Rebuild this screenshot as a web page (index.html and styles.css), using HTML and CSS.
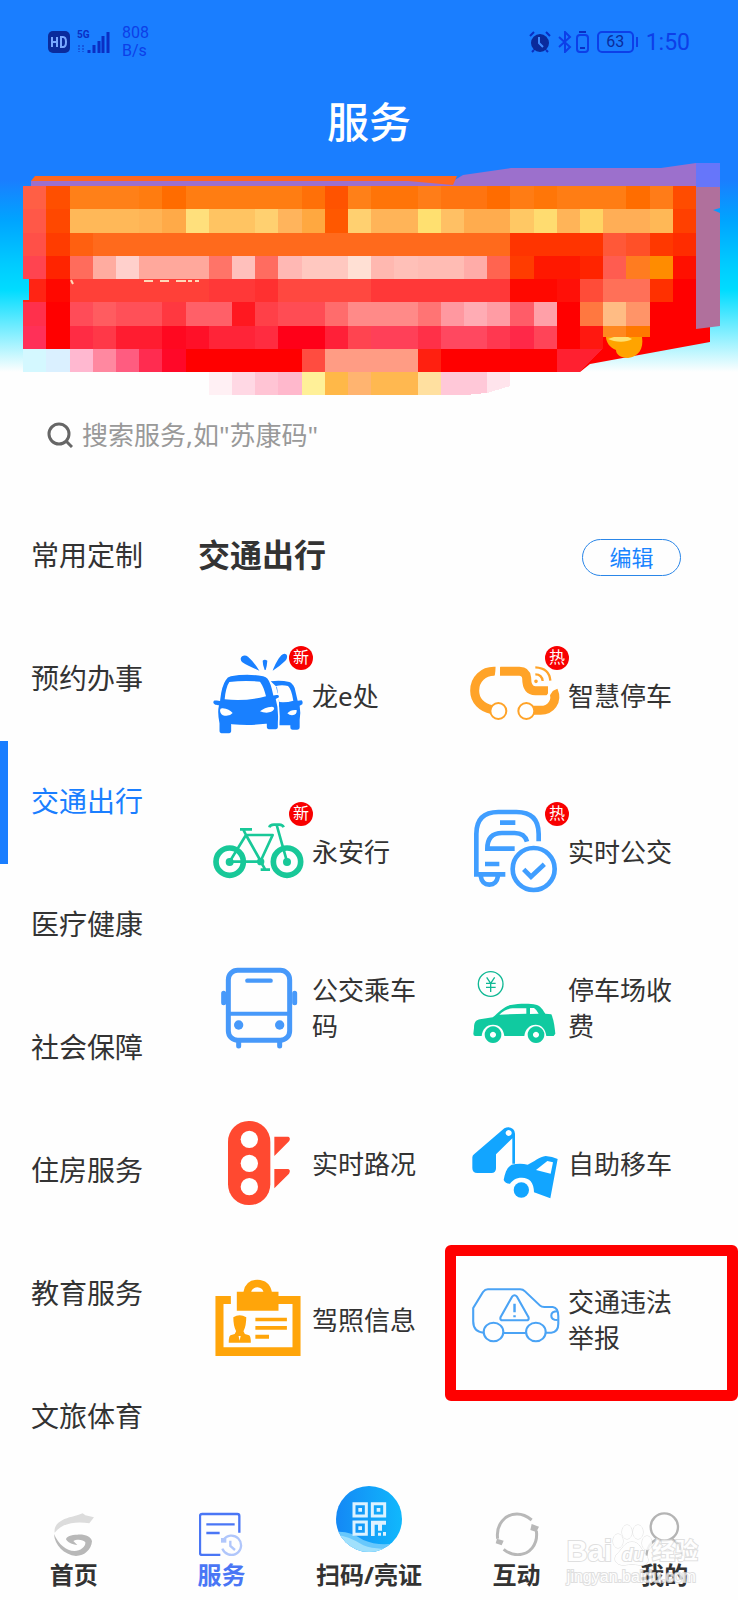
FILE: index.html
```html
<!DOCTYPE html>
<html lang="zh-CN">
<head>
    <meta charset="UTF-8">
    <meta name="viewport" content="width=device-width, initial-scale=1.0">
    <title>服务</title>
    <link rel="stylesheet" href="styles.css">
</head>
<body>
    <header class="header">
        <div class="status-bar">
            <div class="status-left">
                <svg class="hd" viewBox="0 0 22 22"><rect width="22" height="22" rx="5" fill="#0a2b9c"/><path d="M4 6v10M4 11h5M9 6v10M13 6v10h2q3 0 3-5t-3-5z" fill="none" stroke="#78a8ff" stroke-width="2"/></svg>
                <div class="signal">
                    <span class="signal-type">5G</span>
                    <svg viewBox="0 0 34 22" width="34" height="22"><path d="M13 19v3M18 14v8M23 10v12M27 5v17M32 1v21" stroke="#0a2fc4" stroke-width="3"/><path d="M3 14v7M7 14v7" stroke="#1558e0" stroke-width="2" stroke-dasharray="2 1"/></svg>
                </div>
                <div class="speed">808<br>B/s</div>
            </div>
            <div class="status-right">
                <svg width="22" height="22" viewBox="0 0 22 22"><circle cx="11" cy="12" r="9" fill="#0a2b9c"/><path d="M1 5l4-4M17 1l4 4M5 19l-2 2M17 19l2 2" stroke="#0a2fc4" stroke-width="2"/><path d="M10 6v6l4 4" fill="none" stroke="#3f8cff" stroke-width="2"/></svg>
                <svg class="bluetooth" width="14" height="22" viewBox="0 0 14 22"><path d="M1 6l11 10-5 5V1l5 5L1 16" fill="none" stroke="#0d3fe8" stroke-width="2"/></svg>
                <svg width="13" height="22" viewBox="0 0 13 22"><rect x="1" y="4" width="11" height="17" rx="3" fill="none" stroke="#0d3fe8" stroke-width="2"/><path d="M3 1h7M4 17h5" stroke="#0a2fc4" stroke-width="2"/></svg>
                <span class="battery">63</span>
                <time class="clock">1:50</time>
            </div>
        </div>
        <h1 class="page-title">服务</h1>
        <svg class="banner" viewBox="0 162 738 233" preserveAspectRatio="none">
            <path fill="#9c70cc" d="M31 181H453L463 175L511 168H661L696 163V187H31z"/>
            <path fill="#6676fa" d="M696 163h24v24h-24z"/>
            <path fill="#ff671e" d="M35 176H457L453 185L408 181H31z"/>
            <path fill="#ff0000" d="M560 325H710V342L590 364L580 372H560z"/>
            <!-- blocks, one group per row -->
            <g transform="translate(0 186) scale(23.2 23.25)" shape-rendering="crispEdges">
                <g>
                    <path fill="#ff5f45" d="M1 0h1v1h-1z"/><path fill="#ff4f00" d="M2 0h1v1h-1z"/><path fill="#ff8018" d="M3 0h3v1h-3z"/><path fill="#ff7c10" d="M6 0h1v1h-1z"/><path fill="#ff6c00" d="M7 0h1v1h-1z"/><path fill="#ff7d12" d="M8 0h5v1h-5z"/><path fill="#ff7008" d="M13 0h1v1h-1z"/><path fill="#ff5300" d="M14 0h1v1h-1z"/><path fill="#ff8018" d="M15 0h1v1h-1z"/><path fill="#ff7408" d="M16 0h2v1h-2z"/><path fill="#ff7d18" d="M18 0h1v1h-1z"/><path fill="#ff7410" d="M19 0h2v1h-2z"/><path fill="#ff6c00" d="M21 0h1v1h-1z"/><path fill="#ff7c14" d="M22 0h1v1h-1z"/><path fill="#ff7608" d="M23 0h1v1h-1z"/><path fill="#ff7d14" d="M24 0h3v1h-3z"/><path fill="#ff6d00" d="M27 0h1v1h-1z"/><path fill="#ff7c18" d="M28 0h1v1h-1z"/><path fill="#ff4c00" d="M29 0h1v1h-1z"/>
                </g>
                <g transform="translate(0 1)">
                    <path fill="#ff5848" d="M1 0h1v1h-1z"/><path fill="#ff4800" d="M2 0h1v1h-1z"/><path fill="#ffb858" d="M3 0h3v1h-3z"/><path fill="#ffb455" d="M6 0h1v1h-1z"/><path fill="#ffaa48" d="M7 0h1v1h-1z"/><path fill="#ffe07c" d="M8 0h1v1h-1z"/><path fill="#ffc462" d="M9 0h2v1h-2z"/><path fill="#ffd070" d="M11 0h1v1h-1z"/><path fill="#ffb45c" d="M12 0h1v1h-1z"/><path fill="#ffa840" d="M13 0h1v1h-1z"/><path fill="#ff5800" d="M14 0h1v1h-1z"/><path fill="#ffd070" d="M15 0h1v1h-1z"/><path fill="#ffb458" d="M16 0h2v1h-2z"/><path fill="#ffe070" d="M18 0h1v1h-1z"/><path fill="#ffc064" d="M19 0h1v1h-1z"/><path fill="#ffac4e" d="M20 0h2v1h-2z"/><path fill="#ffc864" d="M22 0h1v1h-1z"/><path fill="#ffdc70" d="M23 0h1v1h-1z"/><path fill="#ffb458" d="M24 0h1v1h-1z"/><path fill="#ffd464" d="M25 0h1v1h-1z"/><path fill="#ffae56" d="M26 0h2v1h-2z"/><path fill="#ffb856" d="M28 0h1v1h-1z"/><path fill="#ff4000" d="M29 0h1v1h-1z"/>
                </g>
                <g transform="translate(0 2)">
                    <path fill="#ff5048" d="M1 0h1v1h-1z"/><path fill="#ff3c00" d="M2 0h1v1h-1z"/><path fill="#ff6010" d="M3 0h1v1h-1z"/><path fill="#ff6a1c" d="M4 0h18v1h-18z"/><path fill="#ff3400" d="M22 0h4v1h-4z"/><path fill="#ff5838" d="M26 0h1v1h-1z"/><path fill="#ff5028" d="M27 0h1v1h-1z"/><path fill="#ff3800" d="M28 0h1v1h-1z"/><path fill="#ff2c00" d="M29 0h1v1h-1z"/>
                </g>
                <g transform="translate(0 3)">
                    <path fill="#ff4450" d="M1 0h1v1h-1z"/><path fill="#ff2400" d="M2 0h1v1h-1z"/><path fill="#ff6c5c" d="M3 0h1v1h-1z"/><path fill="#ffaca0" d="M4 0h1v1h-1z"/><path fill="#ffd0cc" d="M5 0h1v1h-1z"/><path fill="#ffa89c" d="M6 0h3v1h-3z"/><path fill="#ff7468" d="M9 0h1v1h-1z"/><path fill="#ffc0bc" d="M10 0h1v1h-1z"/><path fill="#ff6c60" d="M11 0h1v1h-1z"/><path fill="#ffb8b4" d="M12 0h1v1h-1z"/><path fill="#ffc8c0" d="M13 0h2v1h-2z"/><path fill="#ffe0d4" d="M15 0h1v1h-1z"/><path fill="#ffb8b0" d="M16 0h1v1h-1z"/><path fill="#ffc0b8" d="M17 0h1v1h-1z"/><path fill="#ffbcb4" d="M18 0h2v1h-2z"/><path fill="#ffaca8" d="M20 0h1v1h-1z"/><path fill="#ff6450" d="M21 0h1v1h-1z"/><path fill="#ff3c00" d="M22 0h1v1h-1z"/><path fill="#ff1800" d="M23 0h2v1h-2z"/><path fill="#ff2400" d="M25 0h1v1h-1z"/><path fill="#ff5c50" d="M26 0h1v1h-1z"/><path fill="#ff7c20" d="M27 0h1v1h-1z"/><path fill="#ff8c00" d="M28 0h1v1h-1z"/><path fill="#ff1000" d="M29 0h1v1h-1z"/>
                </g>
                <g transform="translate(0 4)">
                    <path fill="#ff2414" d="M1.25 0H2v1H1V.9h.25z"/><path fill="#ff0800" d="M2 0h1v1h-1z"/><path fill="#ff4038" d="M3 0h6v1h-6z"/><path fill="#ff3838" d="M9 0h2v1h-2z"/><path fill="#ff3030" d="M11 0h1v1h-1z"/><path fill="#ff4840" d="M12 0h4v1h-4z"/><path fill="#ff3838" d="M16 0h6v1h-6z"/><path fill="#ff0800" d="M22 0h2v1h-2z"/><path fill="#ff1008" d="M24 0h1v1h-1z"/><path fill="#ff4c38" d="M25 0h1v1h-1z"/><path fill="#ff7058" d="M26 0h2v1h-2z"/><path fill="#ff3000" d="M28 0h1v1h-1z"/><path fill="#ff0000" d="M29 0h1v1h-1z"/>
                </g>
                <g transform="translate(0 5)">
                    <path fill="#ff304c" d="M1 0h1v1h-1z"/><path fill="#ff0000" d="M2 0h1v1h-1z"/><path fill="#ff4c58" d="M3 0h1v1h-1z"/><path fill="#ff5c60" d="M4 0h1v1h-1z"/><path fill="#ff5058" d="M5 0h2v1h-2z"/><path fill="#ff3840" d="M7 0h1v1h-1z"/><path fill="#ff6068" d="M8 0h2v1h-2z"/><path fill="#ff1820" d="M10 0h1v1h-1z"/><path fill="#ff4048" d="M11 0h1v1h-1z"/><path fill="#ff4c54" d="M12 0h2v1h-2z"/><path fill="#ff6c6c" d="M14 0h1v1h-1z"/><path fill="#ff8a88" d="M15 0h3v1h-3z"/><path fill="#ff7474" d="M18 0h1v1h-1z"/><path fill="#ff98a0" d="M19 0h1v1h-1z"/><path fill="#ffacb4" d="M20 0h1v1h-1z"/><path fill="#ff9ca4" d="M21 0h1v1h-1z"/><path fill="#ff5c68" d="M22 0h1v1h-1z"/><path fill="#ffa0a8" d="M23 0h1v1h-1z"/><path fill="#ff0000" d="M24 0h1v1h-1z"/><path fill="#ff7840" d="M25 0h1v1h-1z"/><path fill="#ffbc84" d="M26 0h1v1h-1z"/><path fill="#ff9468" d="M27 0h1v1h-1z"/><path fill="#ff0000" d="M28 0h2v1h-2z"/>
                </g>
                <g transform="translate(0 6)">
                    <path fill="#ff3058" d="M1 0h1v1h-1z"/><path fill="#ff0000" d="M2 0h1v1h-1z"/><path fill="#ff2c44" d="M3 0h1v1h-1z"/><path fill="#ff3848" d="M4 0h1v1h-1z"/><path fill="#ff1c30" d="M5 0h2v1h-2z"/><path fill="#ff0820" d="M7 0h1v1h-1z"/><path fill="#ff1028" d="M8 0h1v1h-1z"/><path fill="#ff2438" d="M9 0h2v1h-2z"/><path fill="#ff2c40" d="M11 0h1v1h-1z"/><path fill="#ff0018" d="M12 0h2v1h-2z"/><path fill="#ff2038" d="M14 0h1v1h-1z"/><path fill="#ff4450" d="M15 0h1v1h-1z"/><path fill="#ff4058" d="M16 0h2v1h-2z"/><path fill="#ff3048" d="M18 0h1v1h-1z"/><path fill="#ff4860" d="M19 0h2v1h-2z"/><path fill="#ff3850" d="M21 0h1v1h-1z"/><path fill="#ff2848" d="M22 0h1v1h-1z"/><path fill="#ff4458" d="M23 0h1v1h-1z"/><path fill="#ff0000" d="M24 0h1v1h-1z"/><path fill="#ff1810" d="M25 0h1v1h-1z"/><path fill="#ff8820" d="M26 0h1v.5h-1z"/><path fill="#ff7800" d="M27 0h1v.5h-1z"/>
                </g>
                <g transform="translate(0 7)">
                    <path fill="#d4f8ff" d="M1 0h1v1h-1z"/><path fill="#daf0ff" d="M2 0h1v1h-1z"/><path fill="#ffb8d0" d="M3 0h1v1h-1z"/><path fill="#ff88a0" d="M4 0h1v1h-1z"/><path fill="#ff5c80" d="M5 0h1v1h-1z"/><path fill="#ff2c50" d="M6 0h1v1h-1z"/><path fill="#ff0828" d="M7 0h1v1h-1z"/><path fill="#ff0000" d="M8 0h5v1h-5z"/><path fill="#ff4c40" d="M13 0h1v1h-1z"/><path fill="#ff9c84" d="M14 0h4v1h-4z"/><path fill="#ff2010" d="M18 0h1v1h-1z"/><path fill="#ff0000" d="M19 0h5v1h-5z"/><path fill="#ff2030" d="M24 0H26L25.3 .7L25 1H24z"/>
                </g>
                <g transform="translate(0 8)">
                    <path fill="#fff0f4" d="M9 0h1v1h-1z"/><path fill="#ffd8e4" d="M10 0h1v1h-1z"/><path fill="#ffc4d4" d="M11 0h1v1h-1z"/><path fill="#ffb8cc" d="M12 0h1v1h-1z"/><path fill="#fff098" d="M13 0h1v1h-1z"/><path fill="#ffb848" d="M14 0h1v1h-1z"/><path fill="#ffb470" d="M15 0h1v1h-1z"/><path fill="#ffb850" d="M16 0h2v1h-2z"/><path fill="#ffe0a0" d="M18 0h1v1h-1z"/><path fill="#ffc8d8" d="M19 0h2V.9L20 1H19z"/><path fill="#ffe4ec" d="M21 0h1V.6L21 .9z"/>
                </g>
            </g>
            <path fill="#b0709c" d="M696 187h24v21l-7 2 7 3V326l-24 3z"/>
            <path fill="#ffa400" d="M606 337h36c2 12-4 20-14 21-8 0-12-4-12-8-6-2-10-8-10-13z"/>
            <path fill="#ffe070" d="M608 339c6 3 18 4 24 0l-4-2h-14z"/>
            <path fill="none" stroke="#ffd8b8" stroke-width="2" d="M71 280l2 4M144 281h9M160 281h9M176 281h10M188 281h4M195 281h4"/>
        </svg>
    </header>

    <form class="search">
        <svg width="26" height="26" viewBox="0 0 26 26"><circle cx="12" cy="12" r="10" fill="none" stroke="#666" stroke-width="3"/><path d="M19 19l6 6" stroke="#666" stroke-width="3"/></svg>
        <input type="search" aria-label="搜索服务" placeholder='搜索服务,如"苏康码"'>
    </form>

    <div class="content">
        <nav class="sidebar">
            <a href="#">常用定制</a>
            <a href="#">预约办事</a>
            <a href="#" class="active">交通出行</a>
            <a href="#">医疗健康</a>
            <a href="#">社会保障</a>
            <a href="#">住房服务</a>
            <a href="#">教育服务</a>
            <a href="#">文旅体育</a>
        </nav>

        <main class="main">
            <div class="section-head">
                <h2>交通出行</h2>
                <button type="button" class="edit">编辑</button>
            </div>
            <div class="services">
                <a href="#" class="service">
                    <span class="icon">
                        <svg viewBox="69 66 270 270" fill="#1980ff">
                            <path d="M152 86c2-10 14-12 22-6 12 10 24 26 34 42-18-8-38-16-52-26q-4-4-4-10zM218 92q6-6 14 0-1 16-5 28h-3q-6-14-6-28zM248 122c6-16 16-36 26-46q8-8 16-2 4 10-4 18-16 16-38 30z"/>
                            <path fill-rule="evenodd" d="M242 154q30-4 56 2 10 4 16 18l9 38 12-1q6 6 2 12l-8 4q4 24 0 42v22q0 8-8 8h-13q-7 0-7-8v-5h-34v-70l-6-44zM258 168q18-4 36 0 10 8 16 44-20 6-42 4zM292 250q10-12 28-10 2 14-14 16-8 0-14-6z"/>
                            <path stroke="#fff" stroke-width="5" d="M84 228l-10-2c-10-4-8-18 2-18l12 2c2-20 8-48 18-62q4-10 16-12 50-8 98 0 10 2 14 8c10 12 14 30 18 50l12-2q8 4 4 12l-8 4c6 20 8 44 6 70v14q0 8-8 8h-22q-8 0-8-8v-8q-52 6-102 1v19q0 8-8 8h-24q-8 0-8-8v-24c-4-20-6-36-2-52z"/>
                            <path fill="#fff" d="M104 208c2-22 6-40 14-52q46-6 92-1c10 14 14 28 18 44q-60 16-124 9zM90 242q0-8 8-7 20 2 30 14-8 10-24 8-12-2-14-15zM210 244q12-12 36-14 8 0 6 8-6 10-22 10-12 0-20-4z"/>
                        </svg>
                        <em class="badge">新</em>
                    </span>
                    <span class="name">龙e处</span>
                </a>
                <a href="#" class="service">
                    <span class="icon">
                        <svg viewBox="57 66 270 270" fill="none" stroke="#ffa328" stroke-width="27">
                            <path d="M136 124C100 122 74 148 74 182c0 30 22 50 52 57"/>
                            <path d="M150 124h58q20 0 22 20 0 38 26 38h38"/>
                            <path d="M310 182c14 32-8 59-38 59h-24"/>
                            <path d="M148 106l-12 36M316 164l-24 36" stroke="#fff" stroke-width="8"/>
                            <circle cx="145" cy="243" r="24" fill="#fff" stroke-width="6"/><circle cx="229" cy="243" r="24" fill="#fff" stroke-width="6"/>
                            <path d="M256 112q42 2 45 40M256 133q20 0 22 20" stroke-width="7"/><circle cx="258" cy="154" r="3" stroke-width="5"/>
                        </svg>
                        <em class="badge">热</em>
                    </span>
                    <span class="name">智慧停车</span>
                </a>
                <a href="#" class="service">
                    <span class="icon">
                        <svg viewBox="69 534 270 270" fill="none" stroke="#18c898" stroke-width="8">
                            <circle cx="119" cy="695" r="41" stroke-width="17"/><circle cx="291" cy="695" r="41" stroke-width="17"/>
                            <circle cx="119" cy="696" r="12" fill="#18c898" stroke="none"/><circle cx="291" cy="696" r="12" fill="#18c898" stroke="none"/>
                            <path stroke-linejoin="round" d="M119 695l49-80h80l-36 78-44-78M119 695h94M291 695l-31-110M168 615l-8-16M150 598h36M238 592q2-8 14-8h16q10 0 13 8M212 695l14 24M212 719h28"/>
                            <circle cx="212" cy="695" r="11" fill="#18c898" stroke="none"/>
                        </svg>
                        <em class="badge">新</em>
                    </span>
                    <span class="name">永安行</span>
                </a>
                <a href="#" class="service">
                    <span class="icon">
                        <svg viewBox="57 534 270 270" fill="none" stroke="#409eff" stroke-width="14">
                            <path d="M166 733H79V612q0-66 66-66h54q67 0 67 66v22M150 578h46M105 702h43M92 738q4 26 26 26t26-26"/>
                            <path d="M194 656h-82q0-47 44-47h38q30 0 37 26"/>
                            <circle cx="251" cy="717" r="63" fill="#fff"/>
                            <path d="M221 718l22 22 40-37"/>
                        </svg>
                        <em class="badge">热</em>
                    </span>
                    <span class="name">实时公交</span>
                </a>
                <a href="#" class="service">
                    <span class="icon">
                        <svg viewBox="69 72 270 270" fill="none" stroke="#4799fa" stroke-width="15">
                            <rect x="115" y="91" width="184" height="210" rx="28"/>
                            <path d="M115 221h184" stroke-width="12"/><path d="M172 122h70" stroke-linecap="round" stroke-width="13"/>
                            <path d="M101 160v28M314 160v28M146 304v14M269 304v14" stroke-linecap="round"/>
                            <circle cx="146" cy="255" r="14" fill="#4799fa" stroke="none"/><circle cx="269" cy="255" r="14" fill="#4799fa" stroke="none"/>
                        </svg>
                    </span>
                    <span class="name">公交乘车码</span>
                </a>
                <a href="#" class="service">
                    <span class="icon">
                        <svg viewBox="57 72 270 270" fill="#10caa0">
                            <circle cx="122" cy="132" r="37" fill="none" stroke="#10b894" stroke-width="4"/>
                            <path d="M110 112l12 18 12-18M108 130h29M108 142h29M122 130v26" fill="none" stroke="#10b894" stroke-width="4"/>
                            <path d="M72 264c0-20 8-24 18-26l38-6c18-14 32-32 54-37 26-5 58-5 76-1 14 4 20 14 28 27l18 2c8 18 10 38 12 58l-5 7h-22c-2-20-14-34-32-34s-32 14-34 34h-60c-2-20-14-34-34-34s-32 14-34 34H76q-6 0-6-7z"/>
                            <path fill="#fff" d="M148 224q18-18 40-19h41v16zM240 204h12q8 5 14 17l-26 1z"/>
                            <path fill-rule="evenodd" d="M129 259a25 25 0 1 0 .1 0zM129 275a9 9 0 1 1-.1 0zM258 259a25 25 0 1 0 .1 0zM258 275a9 9 0 1 1-.1 0z"/>
                        </svg>
                    </span>
                    <span class="name">停车场收费</span>
                </a>
                <a href="#" class="service">
                    <span class="icon">
                        <svg viewBox="69 540 270 270" fill="#ff4930">
                            <rect x="114" y="543" width="127" height="252" rx="62"/>
                            <path d="M253 590h42q8 4 2 14l-44 44zM253 687h42q8 4 2 14l-44 44z"/>
                            <g fill="#fff"><circle cx="178" cy="598" r="26"/><circle cx="178" cy="670" r="26"/><circle cx="178" cy="740" r="26"/></g>
                        </svg>
                    </span>
                    <span class="name">实时路况</span>
                </a>
                <a href="#" class="service">
                    <span class="icon">
                        <svg viewBox="57 540 270 270" fill="#12a5ff">
                            <path fill-rule="evenodd" d="M67 652q0-6 6-10l90-77q14-8 26 2 6 6 6 14v90h-8v-76l-49 48v42q0 14-14 14H82q-15 0-15-15zM176 570a9 9 0 1 0 .1 0z"/>
                            <path fill-rule="evenodd" d="M161 720c4-22 10-38 24-46 16-4 34-4 48 0 18-8 36-24 54-26q20 2 36 9l-22 118-49-18c0-30-14-44-36-44-20 0-28 8-36 18-10 0-16-4-19-11zM258 690l34-27 17 4-7 34z"/>
                            <circle cx="214" cy="750" r="23"/>
                        </svg>
                    </span>
                    <span class="name">自助移车</span>
                </a>
                <a href="#" class="service">
                    <span class="icon">
                        <svg viewBox="66 138 257 270" preserveAspectRatio="none" fill="#ffa50a">
                            <path fill-rule="evenodd" d="M73 198h44v24H96v130h197V222h-40v20H134v-57h19q6-35 40-36 34 1 41 36h19v13h63v180H73zM175 185h35q-4-12-17-13-14 1-18 13z"/>
                            <path d="M187 263h90v11h-90zM187 288h90v11h-90zM187 314h39v12h-39zM124 262q18-12 37 0 0 26-8 42l4 8 12 4q5 2 5 22h-63q0-20 5-22l12-4 4-8q-8-16-8-42z"/>
                            <path fill="#fff" d="M139 318h6l-3 14z"/>
                        </svg>
                    </span>
                    <span class="name">驾照信息</span>
                </a>
                <a href="#" class="service marked">
                    <span class="icon">
                        <svg viewBox="798 138 257 270" preserveAspectRatio="none" fill="none" stroke="#4aa3f5" stroke-width="6" stroke-linejoin="round">
                            <path d="M840 308q-30-2-30-34v-40l28-48q6-8 14-8h92q8 0 14 6l43 43q4 4 12 4h24q16 2 16 28v22q0 25-20 27h-16M896 309h64"/>
                            <circle cx="868" cy="306" r="28"/><circle cx="989" cy="306" r="28"/>
                            <path d="M921 200q7-8 14 0l33 62q2 9-6 9h-68q-8 0-6-9zM1051 244q-18 0-18 13t18 13"/>
                            <path d="M928 221v26M928 256v6" stroke-width="7"/>
                        </svg>
                    </span>
                    <span class="name">交通违法举报</span>
                </a>
            </div>
        </main>
    </div>

    <nav class="tabbar">
        <a href="#" class="tab">
            <svg viewBox="155 126 132 132"><path fill="#dcdcdc" d="M163 188c-4-26 22-42 52-48l20-6 12-4 8 6 26 6-14 18c-32-6-80-4-104 28z"/><path fill="#b8b8b8" d="M161 192c2 34 30 62 66 66 26 0 46-20 48-44-2-14-22-22-44-20-18 0-34 6-34 14 4 8 18 16 34 17l-12-12c8-6 30-6 36 4 2 14-16 26-32 26-26 0-48-20-62-51z"/></svg>
            <span>首页</span>
        </a>
        <a href="#" class="tab active">
            <svg viewBox="598 126 132 132" fill="none" stroke="#4a76f5" stroke-width="7"><path d="M662 255h-55q-6 0-6-6V138q0-6 6-6h106q6 0 6 6v50M620 163h85M620 189h40"/><path d="M671 210a29 29 0 1 1-3 26M692 212v16l14 12" stroke="#b0c6fb"/><path d="M664 204h16v14h-16z" fill="#b0c6fb" stroke="none"/></svg>
            <span>服务</span>
        </a>
        <a href="#" class="tab scan">
            <svg viewBox="0 0 198 198">
                <defs>
                    <linearGradient id="scan-bg"><stop offset="0" stop-color="#1488f5"/><stop offset="1" stop-color="#10b8fc"/></linearGradient>
                    <clipPath id="scan-clip"><circle cx="99" cy="99" r="99"/></clipPath>
                </defs>
                <g clip-path="url(#scan-clip)">
                    <path fill="url(#scan-bg)" d="M0 0h198v198H0z"/>
                    <path fill="#68c8fc" d="M0 138q40-4 82 24 50 22 116 6v30H0z"/>
                    <path fill="#a0e0fc" d="M0 146q40 4 82 32 50 20 116 0v20H0z"/>
                </g>
                <path fill="none" stroke="#dcf2ff" stroke-width="9" d="M54 53h37v37H54zM109 53h37v37h-37zM54 108h37v37H54z"/>
                <path fill="#dcf2ff" d="M67 66h11v11H67zM122 66h11v11h-11zM67 121h11v11H67zM105 104h45v12h-12v18h-12v-18h-10v34h-11zM126 140h9v9h-9zM141 138h9v11h-9z"/>
            </svg>
            <span>扫码/亮证</span>
        </a>
        <a href="#" class="tab">
            <svg viewBox="380 126 132 132" fill="none" stroke="#b8b8b8" stroke-width="9"><path d="M388 206c-6-42 22-74 58-74 18 0 32 8 44 18M504 182c6 42-20 72-56 72-16 0-30-6-42-16"/><path fill="#b8b8b8" stroke="none" d="M490 162l22 8-8 16-18-6zM386 206l20 6-6 14-18-6z"/></svg>
            <span>互动</span>
        </a>
        <a href="#" class="tab">
            <svg viewBox="823 126 132 132" fill="none" stroke="#b4b4b4" stroke-width="7"><circle cx="890" cy="171" r="41"/><path d="M836 258q2-36 30-50M944 258q-2-36-30-50"/></svg>
            <span>我的</span>
        </a>
        <div class="watermark">
            <div class="watermark-brand">
                <span>Bai</span>
                <span class="paw">
                    <svg viewBox="0 0 40 42" fill="#fff" stroke="#d4d4d4"><ellipse cx="6" cy="17" rx="5" ry="7"/><ellipse cx="15" cy="8" rx="5" ry="7"/><ellipse cx="26" cy="8" rx="5" ry="7"/><ellipse cx="35" cy="19" rx="5" ry="7"/><path d="M20 18c8 0 9 8 14 13 5 6 0 12-7 10-5-1-9-1-14 0-8 1-13-5-8-11 5-4 7-12 15-12z"/></svg>
                    <i>du</i>
                </span>
                <span class="jingyan">经验</span>
            </div>
            <div class="watermark-url">jingyan.baidu.com</div>
        </div>
    </nav>
</body>
</html>
```
FILE: styles.css
```css
* {
    box-sizing: border-box;
}
body {
    margin: 0;
    background-color: #fefefe;
    color: #333;
    font-family: "Noto Sans", "Noto Sans CJK SC", sans-serif;
}
a {
    color: inherit;
    text-decoration: none;
}
svg {
    display: block;
    flex-shrink: 0;
}

/* header */
.header {
    background: linear-gradient(#1a7eff 180px, #00a4ff 220px, #00ccff 265px, #00dcff 290px, #8cf0ff 336px, #fefefe 372px);
}
.status-bar {
    display: flex;
    justify-content: space-between;
    align-items: center;
    height: 84px;
    padding: 0 48px;
    color: #0d3fe8;
    font-family: Roboto, sans-serif;
}
.status-left, .status-right {
    display: flex;
    align-items: center;
}
.hd {
    width: 22px;
    height: 22px;
    margin-right: 6px;
}
.signal {
    position: relative;
    margin-right: 12px;
}
.signal-type {
    position: absolute;
    top: -2px;
    left: 1px;
    font-size: 10px;
    line-height: 12px;
    font-weight: bold;
    color: #0a2fc4;
}
.speed {
    font-size: 16px;
    line-height: 18px;
}
.bluetooth {
    margin: 0 4px 0 7px;
}
.battery {
    position: relative;
    width: 37px;
    height: 22px;
    margin: 0 12px 0 8px;
    border: 2px solid #0d3fe8;
    border-radius: 5px;
    font-size: 16px;
    line-height: 18px;
    text-align: center;
    color: #0a2b9c;
}
.battery::after {
    content: "";
    position: absolute;
    top: 4px;
    right: -6px;
    width: 2px;
    height: 10px;
    background-color: #0d3fe8;
}
.clock {
    font-size: 23px;
}
.page-title {
    margin: 0;
    color: #fff;
    font-size: 42px;
    line-height: 76px;
    padding-bottom: 2px;
    font-weight: 500;
    text-align: center;
}
.banner {
    width: 100%;
}

/* search */
.search {
    display: flex;
    align-items: center;
    gap: 9px;
    height: 80px;
    margin-bottom: 20px;
    padding: 0 47px;
}
.search input {
    flex: 1;
    min-width: 0;
    padding: 0;
    border: 0;
    outline: 0;
    background: none;
    font-family: inherit;
    font-size: 26px;
}
.search input::placeholder {
    color: #999;
}

/* content */
.content {
    display: flex;
}
.sidebar {
    flex: 0 0 198px;
}
.sidebar a {
    display: block;
    padding: 0 0 2px 31px;
    font-size: 28px;
    line-height: 121px;
}
.sidebar .active {
    padding-left: 23px;
    border-left: 8px solid #1a7eff;
    color: #1a7eff;
}
.main {
    flex: 1;
    min-width: 0;
}
.section-head {
    display: flex;
    justify-content: space-between;
    align-items: center;
    height: 124px;
    padding-right: 57px;
}
.section-head h2 {
    margin: 0;
    padding-bottom: 4px;
    font-size: 32px;
    line-height: 36px;
    font-weight: bold;
}
.edit {
    width: 99px;
    height: 37px;
    padding: 0;
    border: 1px solid #2a86e8;
    border-radius: 19px;
    background: none;
    color: #1a84ff;
    font-family: inherit;
    font-size: 22px;
    line-height: 32px;
}
.services {
    display: grid;
    grid-template-columns: 1fr 1fr;
    grid-auto-rows: 156px;
    padding: 0 13px 0 15px;
}
.service {
    position: relative;
    display: flex;
    align-items: center;
    gap: 9px;
    padding-right: 40px;
}
.icon {
    position: relative;
    flex: 0 0 90px;
}
.icon svg {
    width: 90px;
    height: 90px;
    overflow: visible;
}
.badge {
    position: absolute;
    top: -6px;
    right: -10px;
    width: 24px;
    height: 24px;
    border-radius: 50%;
    background-color: #f80000;
    color: #fff;
    font-size: 16px;
    line-height: 22px;
    font-style: normal;
    text-align: center;
}
.name {
    padding-bottom: 2px;
    font-size: 26px;
    line-height: 36px;
}
.marked::after {
    content: "";
    position: absolute;
    top: 2px;
    right: -13px;
    bottom: -2px;
    left: -24px;
    border: 11px solid #ff0000;
    border-radius: 6px;
}

/* tab bar */
.tabbar {
    position: relative;
    display: flex;
    height: 121px;
    padding-bottom: 10px;
}
.tab {
    flex: 1 0 0;
    display: flex;
    flex-direction: column;
    justify-content: flex-end;
    align-items: center;
    gap: 4px;
    font-size: 24px;
    line-height: 30px;
    font-weight: bold;
    white-space: nowrap;
}
.tab svg {
    width: 44px;
    height: 44px;
}
.tab.active {
    color: #4a76f5;
}
.scan {
    gap: 8px;
}
.scan svg {
    width: 66px;
    height: 66px;
}

/* watermark over the last tab */
.watermark {
    position: absolute;
    right: 40px;
    bottom: 12px;
    color: #fff;
    font-family: "Liberation Sans", "Noto Sans CJK SC", sans-serif;
    font-weight: bold;
    -webkit-text-stroke: 2px #d8d8d8;
    paint-order: stroke fill;
    opacity: 0.8;
    pointer-events: none;
}
.watermark-brand {
    display: flex;
    align-items: flex-end;
    font-size: 29px;
    line-height: 30px;
}
.paw {
    position: relative;
}
.paw svg {
    width: 40px;
    height: 42px;
}
.paw i {
    position: absolute;
    bottom: 0;
    left: 10px;
    font-size: 18px;
    line-height: 22px;
}
.jingyan {
    font-size: 23px;
}
.watermark-url {
    font-size: 16px;
    line-height: 22px;
    font-weight: normal;
}
```
